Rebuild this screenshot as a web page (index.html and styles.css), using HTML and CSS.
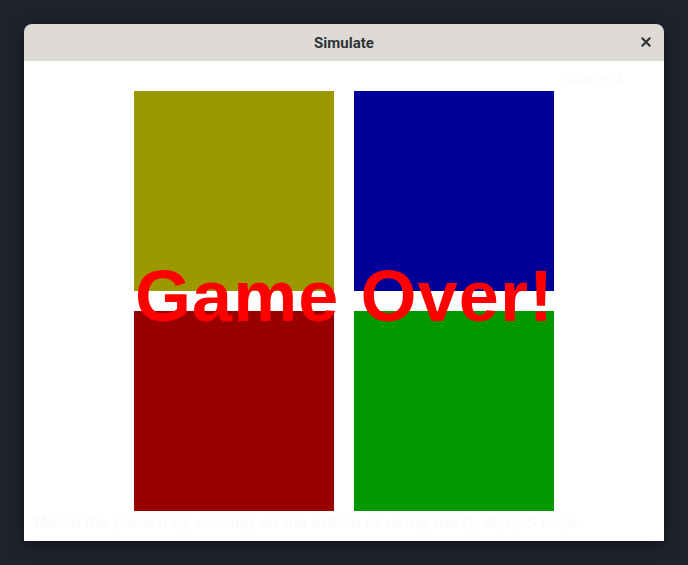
FILE: index.html
```html
<!DOCTYPE html>
<html>
<head>
<meta charset="utf-8">
<link rel="stylesheet" href="styles.css">
</head>
<body>
<div class="desk">
  <div class="window">
    <div class="titlebar">
      <span class="title">Simulate</span>
      <span class="close">
        <svg width="10" height="10" viewBox="0 0 10 10"><path d="M1.5 1.5 L8.5 8.5 M8.5 1.5 L1.5 8.5" stroke="#2e3436" stroke-width="2.2" stroke-linecap="square"/></svg>
      </span>
    </div>
    <div class="canvas">
      <div class="score">Score: 1</div>
      <div class="board">
        <div class="pad yellow"></div>
        <div class="pad blue"></div>
        <div class="pad red"></div>
        <div class="pad green"></div>
      </div>
      <div class="hint">Match the pattern by clicking on the button or using the Q, W, A, S keys.</div>
      <div class="gameover">Game Over!</div>
    </div>
  </div>
</div>
</body>
</html>
```
FILE: styles.css
```css
html, body {
  margin: 0;
  padding: 0;
  background: #1f232e;
}
.desk {
  width: 688px;
  height: 565px;
  padding: 24px;
  box-sizing: border-box;
}
.window {
  width: 640px;
  border-radius: 8px 8px 0 0;
  overflow: hidden;
  box-shadow: 0 4px 18px rgba(0,0,0,0.45);
}
.titlebar {
  height: 37px;
  background: #dedad6;
  display: flex;
  align-items: center;
  justify-content: center;
  position: relative;
  font-family: Roboto, "Noto Sans", sans-serif;
}
.title {
  font-weight: bold;
  font-size: 15px;
  color: #2e3436;
}
.close {
  position: absolute;
  right: 13px;
  top: 13px;
  width: 10px;
  height: 10px;
  display: flex;
}
.canvas {
  height: 480px;
  background: #ffffff;
  position: relative;
  font-family: "Liberation Sans", Arial, sans-serif;
}
.board {
  padding: 30px 0 0 110px;
  display: grid;
  grid-template-columns: 200px 200px;
  grid-template-rows: 200px 200px;
  gap: 20px;
}
.pad.yellow { background: #9c9900; }
.pad.blue { background: #000099; }
.pad.red { background: #990000; }
.pad.green { background: #009900; }
.score {
  position: absolute;
  left: 541px;
  top: 8px;
  font-weight: bold;
  font-size: 15px;
  color: #fbfbfb;
}
.hint {
  padding: 3px 0 0 10px;
  font-weight: bold;
  font-size: 16px;
  color: #fbfbfb;
  white-space: nowrap;
}
.gameover {
  position: absolute;
  left: 0;
  right: 0;
  top: 195px;
  padding-left: 1px;
  text-align: center;
  font-weight: bold;
  font-size: 72px;
  letter-spacing: 1.1px;
  line-height: 80px;
  color: #ff0000;
}
```
